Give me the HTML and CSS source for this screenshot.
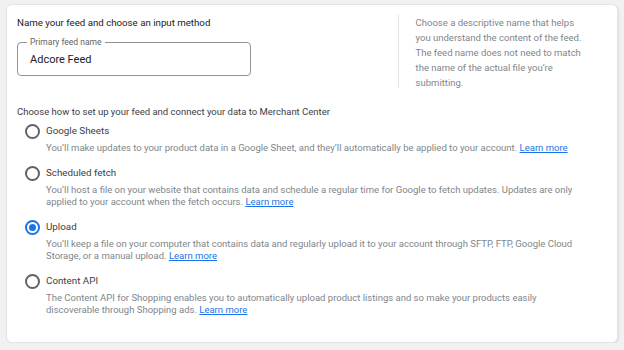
FILE: index.html
```html
<!DOCTYPE html>
<html lang="en">

<head>
    <meta charset="UTF-8">
    <meta name="viewport" content="width=device-width, initial-scale=1.0">
    <title>Create feed</title>
    <link rel="stylesheet" href="styles.css">
</head>

<body>
    <div class="card">
        <div class="top">
            <div class="name">
                <h2 class="title">Name your feed and choose an input method</h2>
                <div class="field">
                    <span class="field-label">Primary feed name</span>
                    <div class="field-value">Adcore Feed</div>
                </div>
            </div>
            <div class="help">
                Choose a descriptive name that helps you understand the content of the feed.
                The feed name does not need to match the name of the actual file you’re submitting.
            </div>
        </div>

        <div class="methods">
            <div class="methods-title">Choose how to set up your feed and connect your data to Merchant Center</div>

            <div class="option">
                <span class="radio"></span>
                <div class="option-text">
                    <div class="option-label">Google Sheets</div>
                    <div class="option-desc">You’ll make updates to your product data in a Google Sheet, and they’ll automatically be applied to your account. <a href="#">Learn more</a></div>
                </div>
            </div>

            <div class="option">
                <span class="radio"></span>
                <div class="option-text">
                    <div class="option-label">Scheduled fetch</div>
                    <div class="option-desc">You’ll host a file on your website that contains data and schedule a regular time for Google to fetch updates. Updates are only applied to your account when the fetch occurs. <a href="#">Learn more</a></div>
                </div>
            </div>

            <div class="option">
                <span class="radio checked"></span>
                <div class="option-text">
                    <div class="option-label">Upload</div>
                    <div class="option-desc">You’ll keep a file on your computer that contains data and regularly upload it to your account through SFTP, FTP, Google Cloud Storage, or a manual upload. <a href="#">Learn more</a></div>
                </div>
            </div>

            <div class="option">
                <span class="radio"></span>
                <div class="option-text">
                    <div class="option-label">Content API</div>
                    <div class="option-desc">The Content API for Shopping enables you to automatically upload product listings and so make your products easily discoverable through Shopping ads. <a href="#">Learn more</a></div>
                </div>
            </div>
        </div>
    </div>
</body>

</html>
```

FILE: styles.css
```css
body {
    margin: 0;
    background: #f1f1f1;
    font-family: Roboto, "Liberation Sans", sans-serif;
    color: #3c4043;
}

.card {
    margin: 4px 6px 0 6px;
    height: 339px;
    box-sizing: border-box;
    background: #fff;
    border: 1px solid #e3e3e3;
    border-radius: 6px;
    box-shadow: 1px 1px 2px rgba(0, 0, 0, 0.08);
    padding: 10px 34px 0 10px;
}

.top {
    display: flex;
}

.name {
    width: 391px;
}

.title {
    margin: 0;
    font-size: 9.7px;
    font-weight: 400;
    line-height: 16px;
    color: #202124;
}

.field {
    position: relative;
    margin-top: 11px;
    width: 234px;
    height: 34px;
    box-sizing: border-box;
    border: 1px solid #8f9499;
    border-radius: 4px;
    display: flex;
    align-items: center;
    padding-left: 12px;
}

.field-label {
    position: absolute;
    top: -6px;
    left: 9px;
    padding: 0 3px;
    background: #fff;
    font-size: 8.5px;
    line-height: 10px;
    color: #5f6368;
}

.field-value {
    font-size: 11px;
    color: #202124;
}

.help {
    height: 73px;
    border-left: 1px solid #e3e3e3;
    padding-left: 17px;
    width: 172px;
    font-size: 9.5px;
    line-height: 15px;
    color: #80868b;
}

.methods {
    margin-top: 16px;
}

.methods-title {
    font-size: 9.5px;
    line-height: 16px;
    color: #3c4043;
}

.option {
    display: flex;
    margin-top: 3px;
}

.option + .option {
    margin-top: 11px;
}

.radio {
    flex: none;
    width: 15px;
    height: 15px;
    box-sizing: border-box;
    margin: 1px 6px 0 8px;
    border: 2px solid #5f6368;
    border-radius: 50%;
    position: relative;
}

.radio.checked {
    border-color: #1a73e8;
}

.radio.checked::after {
    content: "";
    position: absolute;
    left: 2px;
    top: 2px;
    width: 7px;
    height: 7px;
    border-radius: 50%;
    background: #1a73e8;
}

.option-label {
    font-size: 9.8px;
    line-height: 16px;
    color: #3c4043;
}

.option-desc {
    margin-top: 3px;
    font-size: 9.5px;
    line-height: 12px;
    color: #80868b;
}

.option-desc a {
    color: #1a73e8;
}
```
